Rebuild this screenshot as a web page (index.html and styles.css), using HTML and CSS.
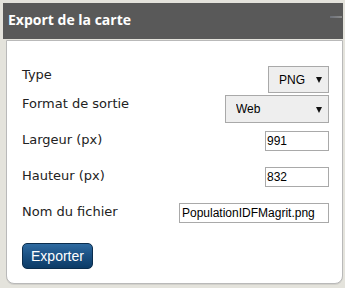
FILE: index.html
```html
<!DOCTYPE html>
<html lang="fr">
<head>
<meta charset="utf-8">
<title>Export de la carte</title>
<link rel="stylesheet" href="styles.css">
</head>
<body>
<div class="dialog">
  <div class="dialog-header">
    <span class="dialog-title">Export de la carte</span>
    <span class="minimize"></span>
  </div>
  <div class="dialog-body">
    <div class="form">
      <label class="label">Type</label>
      <div class="control">
        <span class="select-wrap select-type">
          <select class="select"><option>PNG</option></select>
        </span>
      </div>
      <label class="label">Format de sortie</label>
      <div class="control">
        <span class="select-wrap select-format">
          <select class="select"><option>Web</option></select>
        </span>
      </div>
      <label class="label">Largeur (px)</label>
      <div class="control"><input class="input input-num" type="text" value="991"></div>
      <label class="label">Hauteur (px)</label>
      <div class="control"><input class="input input-num" type="text" value="832"></div>
      <label class="label">Nom du fichier</label>
      <div class="control"><input class="input input-name" type="text" value="PopulationIDFMagrit.png"></div>
    </div>
    <button class="btn-export" type="button">Exporter</button>
  </div>
</div>
</body>
</html>
```

FILE: styles.css
```css
html, body {
  margin: 0;
  padding: 0;
}
body {
  background: #e4e3dc;
  width: 345px;
  height: 288px;
  overflow: hidden;
}
.dialog {
  padding-top: 3px;
}
.dialog-header {
  margin-left: 3px;
  width: 340px;
  height: 36px;
  background: #595959;
  display: flex;
  justify-content: space-between;
  align-items: flex-start;
  box-sizing: border-box;
}
.dialog-title {
  font-family: "Open Sans", "DejaVu Sans", sans-serif;
  font-weight: bold;
  font-size: 14px;
  line-height: 19px;
  color: #ffffff;
  padding-top: 7px;
  padding-left: 5px;
}
.minimize {
  width: 12px;
  height: 2px;
  margin-top: 13px;
  margin-right: 1px;
  background: linear-gradient(to right, #6c7078, #8a8a8a);
}
.dialog-body {
  margin-left: 6px;
  margin-top: 1px;
  width: 337px;
  height: 244px;
  box-sizing: border-box;
  background: #ffffff;
  border: 1px solid #b9b9b9;
  border-radius: 0 0 8px 8px;
  box-shadow: 0 1px 0 #d2d1cb;
  padding: 25px 13px 0 15px;
}
.form {
  display: grid;
  grid-template-columns: 1fr auto;
  grid-template-rows: 29px 36px 36px 36px 40px;
  align-items: start;
}
.label {
  font-family: "DejaVu Sans", Verdana, sans-serif;
  font-size: 13px;
  line-height: 15px;
  color: #222222;
  margin-top: 1px;
}
.control {
  display: flex;
  justify-content: flex-end;
}
.select-wrap {
  position: relative;
  display: block;
}
.select-wrap::after {
  content: "";
  position: absolute;
  right: 7px;
  top: 11px;
  width: 0;
  height: 0;
  border-left: 3px solid transparent;
  border-right: 3px solid transparent;
  border-top: 6px solid #111111;
  pointer-events: none;
}
.select {
  -webkit-appearance: none;
  appearance: none;
  display: block;
  box-sizing: border-box;
  margin: 0;
  background: #eeeeee;
  border: 1px solid #a9a9a9;
  border-radius: 0;
  font-family: "Liberation Sans", Arial, sans-serif;
  font-size: 12px;
  color: #000000;
  outline: none;
}
.select-type .select {
  width: 61px;
  height: 27px;
  padding: 0 0 0 10px;
}
.select-format .select {
  width: 104px;
  height: 28px;
  padding: 0 0 0 10px;
}
.select-format::after {
  top: 12px;
}
.input {
  display: block;
  box-sizing: border-box;
  margin: 0;
  height: 20px;
  padding: 0 0 0 1px;
  border: 1px solid #a9a9a9;
  border-radius: 0;
  background: #ffffff;
  font-family: "Liberation Sans", Arial, sans-serif;
  font-size: 12px;
  color: #000000;
  outline: none;
}
.input-num {
  width: 64px;
}
.input-name {
  width: 150px;
  padding-left: 2px;
}
.btn-export {
  display: block;
  margin: 0;
  width: 71px;
  height: 26px;
  padding: 0;
  border: 1px solid #0b2d4d;
  border-radius: 5px;
  background: linear-gradient(to bottom, #2f6ba1 0%, #1c5285 45%, #0c3b66 100%);
  color: #ffffff;
  font-family: "Liberation Sans", Arial, sans-serif;
  font-size: 14px;
  line-height: 24px;
  cursor: pointer;
}
```
